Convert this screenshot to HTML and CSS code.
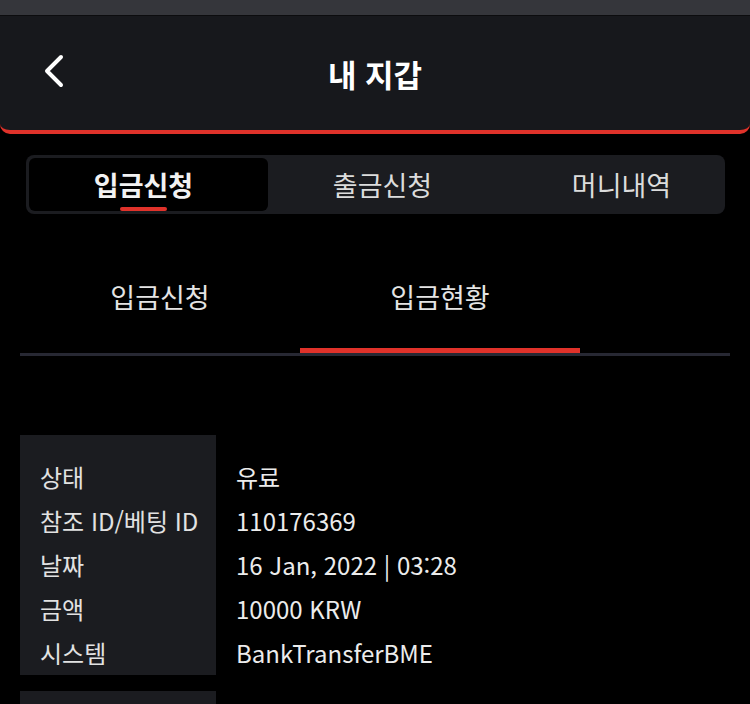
FILE: index.html
```html
<!DOCTYPE html>
<html lang="ko">
<head>
    <meta charset="UTF-8">
    <meta name="viewport" content="width=device-width, initial-scale=1.0">
    <title>내 지갑</title>
    <link rel="stylesheet" href="styles.css">
</head>
<body>

    <!-- Top status strip -->
    <div class="status-strip"></div>

    <!-- Header -->
    <header class="header">
        <button class="back-btn" aria-label="back">
            <svg width="24" height="36" viewBox="0 0 24 36">
                <path d="M19 4 L5 18 L19 32" fill="none" stroke="#fff" stroke-width="4" stroke-linecap="round" stroke-linejoin="round"/>
            </svg>
        </button>
        <h1 class="title">내 지갑</h1>
        <span></span>
    </header>

    <!-- Main tabs -->
    <div class="segment">
        <div class="segment-tab active">입금신청</div>
        <div class="segment-tab">출금신청</div>
        <div class="segment-tab">머니내역</div>
    </div>

    <!-- Sub tabs -->
    <div class="sub-tabs">
        <div class="sub-tab">입금신청</div>
        <div class="sub-tab active">입금현황</div>
    </div>

    <!-- Deposit records -->
    <div class="records">
        <div class="record">
            <div class="record-labels">
                <div>상태</div>
                <div>참조 ID/베팅 ID</div>
                <div>날짜</div>
                <div>금액</div>
                <div>시스템</div>
            </div>
            <div class="record-values">
                <div>유료</div>
                <div>110176369</div>
                <div>16 Jan, 2022 | 03:28</div>
                <div>10000 KRW</div>
                <div>BankTransferBME</div>
            </div>
        </div>
        <div class="record">
            <div class="record-labels">
                <div>상태</div>
                <div>참조 ID/베팅 ID</div>
                <div>날짜</div>
                <div>금액</div>
                <div>시스템</div>
            </div>
            <div class="record-values">
                <div>유료</div>
                <div>110176368</div>
                <div>16 Jan, 2022 | 03:20</div>
                <div>10000 KRW</div>
                <div>BankTransferBME</div>
            </div>
        </div>
    </div>

</body>
</html>
```

FILE: styles.css
```css
/* Base */
body {
    margin: 0;
    background-color: #000;
    color: #e8e8e8;
    font-family: "Noto Sans CJK KR", "Noto Sans", sans-serif;
    overflow: hidden;
}

.status-strip {
    height: 15px;
    background-color: #35363b;
    border-bottom: 1px solid #0c0c0e;
}

/* Header */
.header {
    display: grid;
    grid-template-columns: 100px 1fr 100px;
    align-items: center;
    height: 114px;
    background-color: #17181c;
    border-bottom: 4px solid #e0322a;
    border-radius: 0 0 10px 10px;
}

.back-btn {
    background: transparent;
    border: none;
    padding: 0 0 0 42px;
    margin-top: -4px;
    cursor: pointer;
    display: flex;
}

.title {
    margin: 0;
    text-align: center;
    font-size: 31px;
    font-weight: 700;
    color: #fff;
}

/* Main segmented tabs */
.segment {
    display: flex;
    margin: 21px 25px 0 26px;
    padding: 3px;
    height: 53px;
    background-color: #1b1c20;
    border-radius: 8px;
    overflow: hidden;
}

.segment-tab {
    flex: 0 0 229px;
    padding-right: 10px;
    display: flex;
    align-items: center;
    justify-content: center;
    font-size: 27px;
    color: #dcdcdc;
    border-radius: 6px;
    position: relative;
}

.segment-tab.active {
    background-color: #000;
    color: #f2f2f2;
    font-weight: 700;
}

.segment-tab.active::after {
    content: "";
    position: absolute;
    left: 91px;
    bottom: 0;
    width: 47px;
    height: 4px;
    border-radius: 2px;
    background-color: #e0322a;
}

/* Sub tabs */
.sub-tabs {
    display: flex;
    margin: 42px 20px 0 20px;
    border-bottom: 3px solid #272833;
}

.sub-tab {
    width: 280px;
    padding-top: 24px;
    height: 68px;
    text-align: center;
    font-size: 27px;
    line-height: 34px;
    color: #e4e4e4;
    border-bottom: 5px solid transparent;
}

.sub-tab.active {
    border-bottom-color: #e0322a;
}

/* Records */
.records {
    display: flex;
    flex-direction: column;
    gap: 16px;
    margin: 79px 20px 0 20px;
}

.record {
    display: flex;
    gap: 20px;
    font-size: 24px;
    line-height: 44px;
}

.record-labels {
    width: 176px;
    padding: 20px 0 0 20px;
    background-color: #1b1c20;
    color: #e2e2e2;
}

.record-values {
    padding-top: 20px;
    color: #ececec;
}
```
